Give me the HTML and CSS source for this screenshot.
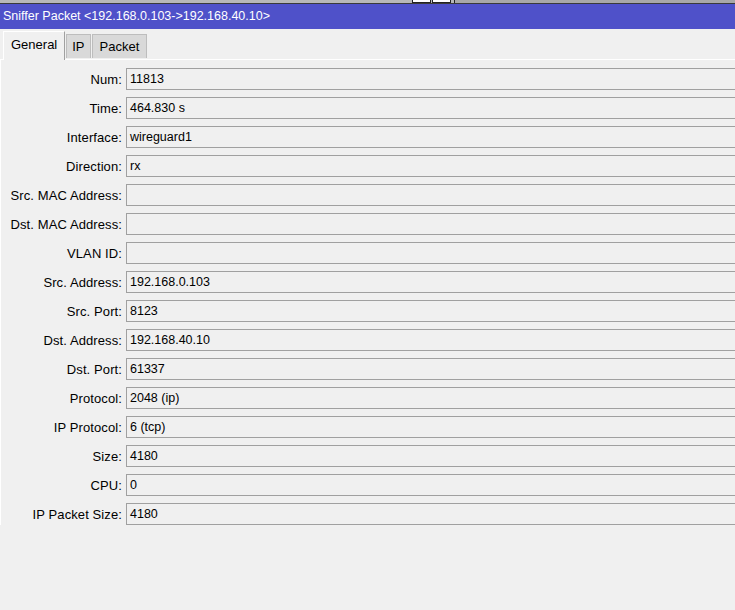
FILE: index.html
```html
<!DOCTYPE html>
<html>
<head>
<meta charset="utf-8">
<link rel="stylesheet" href="styles.css">
</head>
<body>
<div class="topstrip">
  <div class="strip-left"></div>
  <div class="strip-btn"></div>
  <div class="strip-btn"></div>
  <div class="strip-right"></div>
</div>
<div class="title">Sniffer Packet &lt;192.168.0.103-&gt;192.168.40.10&gt;</div>
<div class="tabs">
  <div class="tab active">General</div>
  <div class="tab tab-ip">IP</div>
  <div class="tab tab-packet">Packet</div>
</div>
<div class="panel">
  <div class="form">
    <div class="label">Num:</div><div class="field">11813</div>
    <div class="label">Time:</div><div class="field">464.830 s</div>
    <div class="label">Interface:</div><div class="field">wireguard1</div>
    <div class="label">Direction:</div><div class="field">rx</div>
    <div class="label">Src. MAC Address:</div><div class="field"></div>
    <div class="label">Dst. MAC Address:</div><div class="field"></div>
    <div class="label">VLAN ID:</div><div class="field"></div>
    <div class="label">Src. Address:</div><div class="field">192.168.0.103</div>
    <div class="label">Src. Port:</div><div class="field">8123</div>
    <div class="label">Dst. Address:</div><div class="field">192.168.40.10</div>
    <div class="label">Dst. Port:</div><div class="field">61337</div>
    <div class="label">Protocol:</div><div class="field">2048 (ip)</div>
    <div class="label">IP Protocol:</div><div class="field">6 (tcp)</div>
    <div class="label">Size:</div><div class="field">4180</div>
    <div class="label">CPU:</div><div class="field">0</div>
    <div class="label">IP Packet Size:</div><div class="field">4180</div>
  </div>
</div>
</body>
</html>
```
FILE: styles.css
```css
html, body {
  margin: 0;
  padding: 0;
  background: #f0f0f0;
  overflow: hidden;
  height: 100%;
}
body {
  font-family: "Liberation Sans", Arial, sans-serif;
  color: #000;
}
.topstrip {
  display: flex;
  height: 3px;
  border-bottom: 1px solid #3a3a3a;
  background: #b8b8b8;
}
.strip-left {
  width: 412px;
}
.strip-btn {
  width: 17px;
  height: 2px;
  background: #fff;
  border: 1px solid #222;
  border-top: none;
  margin-right: 1px;
}
.strip-right {
  flex: 1;
  margin-left: 2px;
  border-left: 1px solid #222;
  background: #a8a8a8;
}
.title {
  height: 25px;
  line-height: 25px;
  background: #4f51c9;
  color: #fff;
  font-size: 12.5px;
  padding-left: 3px;
  white-space: nowrap;
}
.tabs {
  display: flex;
  align-items: flex-end;
  height: 30px;
  padding-left: 3px;
}
.tab {
  box-sizing: border-box;
  height: 24px;
  margin-bottom: 1px;
  font-size: 13px;
  line-height: 24px;
  background: #d9d9d9;
  border: 1px solid #bdbdbd;
  border-bottom: none;
  margin-left: 1px;
}
.tab-ip {
  padding: 0 5px;
}
.tab-packet {
  padding: 0 7px;
}
.tab.active {
  height: 29px;
  margin-bottom: -1px;
  margin-left: 0;
  padding: 0 7px;
  line-height: 26px;
  background: #f0f0f0;
  border: 1px solid #fff;
  border-right: 1px solid #a0a0a0;
  border-bottom: none;
  position: relative;
  z-index: 1;
}
.panel {
  border-top: 1px solid #fff;
  border-left: 1px solid #fff;
  padding-top: 8px;
}
.form {
  display: grid;
  grid-template-columns: 121px 1fr;
  column-gap: 4px;
  row-gap: 7px;
  width: calc(100% + 10px);
}
.label {
  font-size: 13px;
  letter-spacing: 0.1px;
  line-height: 23px;
  height: 22px;
  text-align: right;
  white-space: nowrap;
}
.field {
  box-sizing: border-box;
  height: 22px;
  border: 1px solid #a0a0a0;
  background: #f0f0f0;
  font-size: 12.5px;
  line-height: 21px;
  padding-left: 3px;
}
```
